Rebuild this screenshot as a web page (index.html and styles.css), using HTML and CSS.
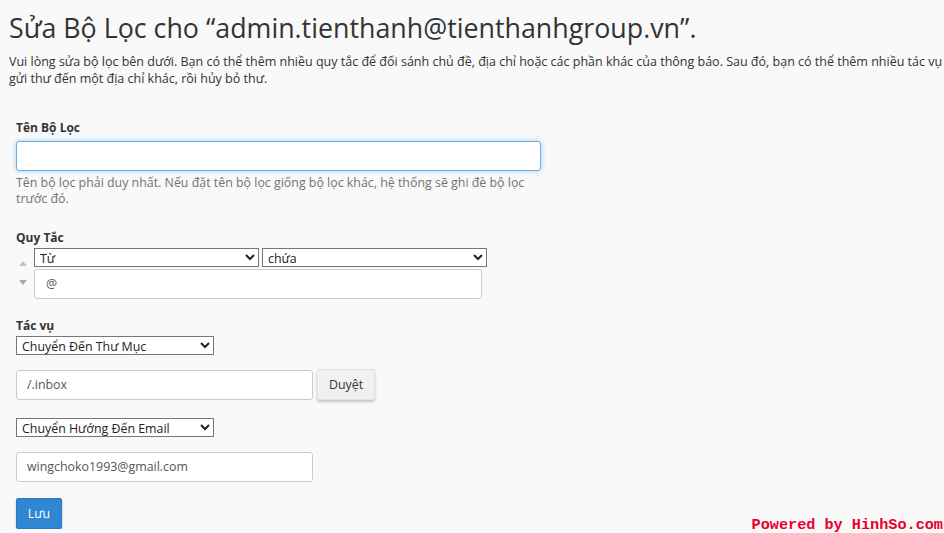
FILE: index.html
```html
<!DOCTYPE html>
<html lang="vi">
<head>
  <meta charset="utf-8">
  <title>Sửa Bộ Lọc</title>
  <link rel="stylesheet" href="styles.css">
</head>
<body>
  <main>
    <h1>Sửa Bộ Lọc cho “admin.tienthanh@tienthanhgroup.vn”.</h1>
    <p class="intro">Vui lòng sửa bộ lọc bên dưới. Bạn có thể thêm nhiều quy tắc để đối sánh chủ đề, địa chỉ hoặc các phần khác của thông báo. Sau đó, bạn có thể thêm nhiều tác vụ gửi thư đến một địa chỉ khác, rồi hủy bỏ thư.</p>

    <form class="filter-form">
      <div class="group group-name">
        <label class="field-label" for="filter_name">Tên Bộ Lọc</label>
        <input class="text-input wide focus" type="text" id="filter_name" value="">
        <p class="help">Tên bộ lọc phải duy nhất. Nếu đặt tên bộ lọc giống bộ lọc khác, hệ thống sẽ ghi đè bộ lọc trước đó.</p>
      </div>

      <div class="group group-rule">
        <div class="field-label">Quy Tắc</div>
        <div class="rule">
          <div class="arrows">
            <span class="arrow up"></span>
            <span class="arrow down"></span>
          </div>
          <div class="rule-body">
            <div class="rule-selects">
              <select class="plain-select"><option>Từ</option></select>
              <select class="plain-select"><option>chứa</option></select>
            </div>
            <input class="text-input rule-value" type="text" value="@">
          </div>
        </div>
      </div>

      <div class="group group-action">
        <div class="field-label">Tác vụ</div>
        <select class="plain-select action-select first"><option>Chuyển Đến Thư Mục</option></select>
        <div class="row">
          <input class="text-input medium" type="text" value="/.inbox">
          <button type="button" class="btn">Duyệt</button>
        </div>
        <select class="plain-select action-select"><option>Chuyển Hướng Đến Email</option></select>
        <div class="row">
          <input class="text-input medium" type="text" value="wingchoko1993@gmail.com">
        </div>
      </div>

      <button type="button" class="btn btn-primary">Lưu</button>
    </form>
  </main>
  <div class="watermark">Powered by HinhSo.com</div>
</body>
</html>
```

FILE: styles.css
```css
*, *::before, *::after { box-sizing: border-box }

html, body {
  overflow: hidden;
}

body {
  margin: 0;
  background: #f9f9f9;
  color: #333;
  font: 12px/1.42857 "Open Sans", sans-serif;
}

main {
  width: 960px;
  padding: 0 0 0 9px;
}

h1 {
  font-size: 26.8px;
  font-weight: 400;
  line-height: 1.1;
  margin: 13px 0 11px;
  color: #333;
}

.intro {
  margin: 0;
  padding-right: 10px;
  font-size: 12.5px;
  line-height: 17px;
}

/*///////////// Form */

.filter-form {
  padding: 32px 0 0 7px;
}

.group-name { margin-bottom: 22px; }
.group-rule { margin-bottom: 18px; }
.group-action { margin-bottom: 16px; }

.field-label {
  display: block;
  font-weight: 700;
  margin-bottom: 4px;
}

.text-input {
  display: block;
  font: inherit;
  font-size: 12.4px;
  color: #555;
  height: 30px;
  padding: 0 10px;
  background: #fff;
  border: 1px solid #ccc;
  border-radius: 3px;
}

.wide {
  width: 525px;
  margin-top: 1px;
}

.medium { width: 297px; }

.focus {
  border-color: #66afe9;
  box-shadow: 0 0 5px rgba(102, 175, 233, 0.6);
}

.help {
  margin: 4px 0 0;
  width: 525px;
  color: #737373;
  font-size: 12.4px;
  line-height: 16px;
}

/*///////////// Rule */

.rule {
  display: flex;
  gap: 6px;
  margin-top: -2px;
}

.arrows {
  display: flex;
  flex-direction: column;
  gap: 14px;
  padding: 13px 0 0 3px;
  width: 12px;
}

.arrow {
  width: 0;
  height: 0;
  border-left: 4px solid transparent;
  border-right: 4px solid transparent;
}

.arrow.up { border-bottom: 5px solid #c4c4c4; }
.arrow.down { border-top: 5px solid #a8a8a8; }

.rule-selects {
  display: flex;
  gap: 3px;
  margin-bottom: 2px;
}

.rule-selects .plain-select { width: 225px; }

.rule-value {
  width: 448px;
  padding-left: 11px;
}

.plain-select {
  font: inherit;
  font-size: 12.4px;
  color: #222;
  height: 19px;
  padding: 0 1px;
  background: #fff;
  border: 1px solid #767676;
  border-radius: 0;
}

.action-select {
  display: block;
  width: 198px;
}

.action-select.first { margin-top: -2px; }

.row {
  display: flex;
  gap: 4px;
  margin: 15px 0 18px;
}

.row:last-child { margin-bottom: 0; }

/*///////////// Buttons */

.btn {
  font: inherit;
  font-size: 12.4px;
  color: #333;
  width: 58px;
  height: 31px;
  padding: 0;
  background: #f1f1f1;
  border: 1px solid #e2e2e2;
  border-radius: 2px;
  box-shadow: 0 2px 3px rgba(0, 0, 0, 0.2);
  margin-top: -1px;
}

.btn-primary {
  color: #fff;
  background: #2f87d1;
  border-color: #2a7cc2;
  width: 46px;
  height: 31px;
  margin-top: 0;
}

.watermark {
  position: absolute;
  right: 1px;
  bottom: 0;
  color: #e8002c;
  font: 700 15.2px/15px "Liberation Mono", monospace;
}
```
